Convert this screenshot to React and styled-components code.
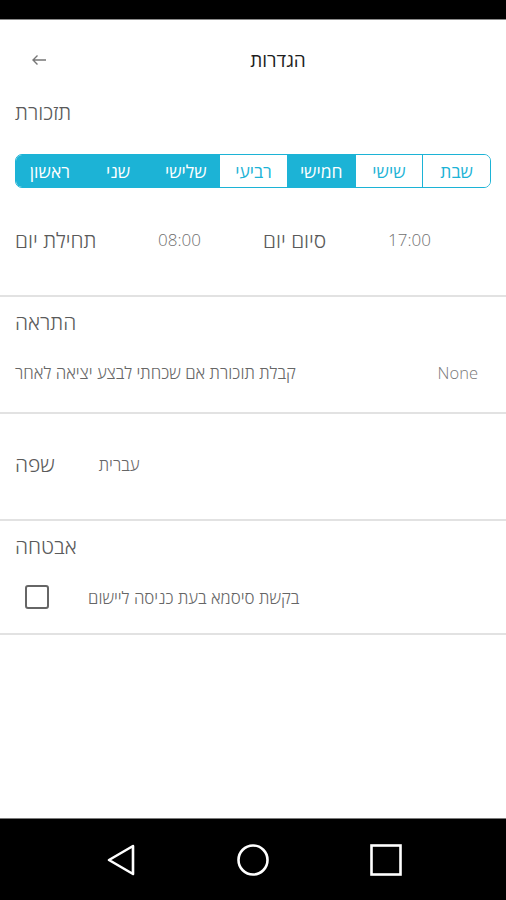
import React, { useState } from 'react'
import styled, { createGlobalStyle } from 'styled-components'

const CYAN = '#1cb3d6'

const DAYS = [
  { name: 'ראשון', on: true },
  { name: 'שני', on: true },
  { name: 'שלישי', on: true },
  { name: 'רביעי', on: false },
  { name: 'חמישי', on: true },
  { name: 'שישי', on: false },
  { name: 'שבת', on: false },
]

const Global = createGlobalStyle`
  html, body { margin: 0; padding: 0; background: #fff; }
  body { font-family: "Open Sans", "DejaVu Sans", sans-serif; font-weight: 300; }
`

export default function App() {
  const [days, setDays] = useState(DAYS)
  const [askPass, setAskPass] = useState(false)

  const toggle = (i) => {
    setDays(days.map((d, j) => (j === i ? { ...d, on: !d.on } : d)))
  }

  return (
    <Screen>
      <Global />
      <StatusBar />
      <Header>
        <BackBtn>
          <svg width="16" height="12" viewBox="0 0 16 12">
            <path d="M15 6H2M6.5 1.5L2 6l4.5 4.5" fill="none" stroke="#777" strokeWidth="1.4" />
          </svg>
        </BackBtn>
        <Title>הגדרות</Title>
      </Header>

      <Section top={0} bottom={43}>
        <SectionTitle>תזכורת</SectionTitle>
        <DayBar>
          {days.map((d, i) => (
            <Day key={d.name} on={d.on} onClick={() => toggle(i)}>{d.name}</Day>
          ))}
        </DayBar>
        <TimesRow>
          <Label>תחילת יום</Label>
          <Time>08:00</Time>
          <Label>סיום יום</Label>
          <Time>17:00</Time>
        </TimesRow>
      </Section>
      <Divider />

      <Section top={13} bottom={29}>
        <SectionTitle>התראה</SectionTitle>
        <AlertRow>
          <Small>קבלת תוכורת אם שכחתי לבצע יציאה לאחר</Small>
          <Value>None</Value>
        </AlertRow>
      </Section>
      <Divider />

      <Section top={38} bottom={43}>
        <LangRow>
          <SectionTitle>שפה</SectionTitle>
          <Small>עברית</Small>
        </LangRow>
      </Section>
      <Divider />

      <Section top={13} bottom={24}>
        <SectionTitle>אבטחה</SectionTitle>
        <CheckRow onClick={() => setAskPass(!askPass)}>
          <Box checked={askPass} />
          <Small>בקשת סיסמא בעת כניסה ליישום</Small>
        </CheckRow>
      </Section>
      <Divider />

      <Spacer />
      <NavBar>
        <svg width="30" height="34" viewBox="0 0 30 34">
          <path d="M27 3L3 17l24 14z" fill="none" stroke="#fff" strokeWidth="2.6" strokeLinejoin="round" />
        </svg>
        <svg width="34" height="34" viewBox="0 0 34 34">
          <circle cx="17" cy="17" r="14.5" fill="none" stroke="#fff" strokeWidth="2.6" />
        </svg>
        <svg width="32" height="32" viewBox="0 0 32 32">
          <rect x="1.5" y="1.5" width="29" height="29" fill="none" stroke="#fff" strokeWidth="2.6" />
        </svg>
      </NavBar>
    </Screen>
  )
}

const Screen = styled.div`
  width: 506px;
  height: 900px;
  display: flex;
  flex-direction: column;
  background: #fff;
  overflow: hidden;
`

const StatusBar = styled.div`
  height: 20px;
  background: #000;
  border-bottom: 1px solid #8a8a8a;
  box-sizing: border-box;
`

const Header = styled.div`
  height: 80px;
  position: relative;
  display: flex;
  align-items: center;
  justify-content: center;
`

const BackBtn = styled.div`
  position: absolute;
  left: 31px;
  top: 34px;
  display: flex;
`

const Title = styled.div`
  font-size: 19px;
  font-weight: 400;
  color: #1e1e1e;
  line-height: 24px;
  padding-left: 50px;
`

const Section = styled.div`
  padding: ${(p) => p.top}px 15px ${(p) => p.bottom}px 15px;
  display: flex;
  flex-direction: column;
`

const SectionTitle = styled.div`
  font-size: 21px;
  line-height: 24px;
  color: #5a5a5a;
  text-align: left;
`

const DayBar = styled.div`
  margin-top: 30px;
  height: 34px;
  display: grid;
  grid-template-columns: repeat(7, 1fr);
  border: 1.5px solid ${CYAN};
  border-radius: 7px;
  overflow: hidden;
  box-sizing: border-box;
`

const Day = styled.div`
  display: flex;
  align-items: center;
  justify-content: center;
  font-size: 17.5px;
  font-weight: 400;
  background: ${(p) => (p.on ? CYAN : '#fff')};
  color: ${(p) => (p.on ? '#fff' : CYAN)};
  border-left: 1.5px solid ${CYAN};
  cursor: pointer;
  &:first-child { border-left: none; }
`

const TimesRow = styled.div`
  margin-top: 40px;
  display: grid;
  grid-template-columns: 143px 105px 125px auto;
  align-items: center;
  line-height: 24px;
`

const Label = styled.div`
  font-size: 21px;
  color: #5a5a5a;
`

const Time = styled.div`
  font-size: 17px;
  color: #707070;
`

const AlertRow = styled.div`
  margin-top: 29px;
  display: flex;
  justify-content: space-between;
  align-items: center;
  line-height: 20px;
`

const Small = styled.div`
  font-size: 16.9px;
  color: #666;
`

const Value = styled.div`
  font-size: 16.5px;
  color: #777;
  margin-right: 13px;
`

const LangRow = styled.div`
  display: flex;
  align-items: center;
  gap: 44px;
`

const CheckRow = styled.div`
  margin-top: 27px;
  display: flex;
  align-items: center;
  gap: 39px;
  padding-left: 10px;
  cursor: pointer;
`

const Box = styled.div`
  width: 24px;
  height: 24px;
  box-sizing: border-box;
  border: 2px solid #666;
  border-radius: 3px;
  background: ${(p) => (p.checked ? CYAN : '#fff')};
`

const Divider = styled.div`
  height: 2px;
  background: #e2e2e2;
`

const Spacer = styled.div`
  flex: 1;
`

const NavBar = styled.div`
  height: 82px;
  background: #000;
  border-top: 1px solid #7a7a7a;
  box-sizing: border-box;
  display: flex;
  align-items: center;
  justify-content: center;
  gap: 100px;
  padding-left: 2px;
`
